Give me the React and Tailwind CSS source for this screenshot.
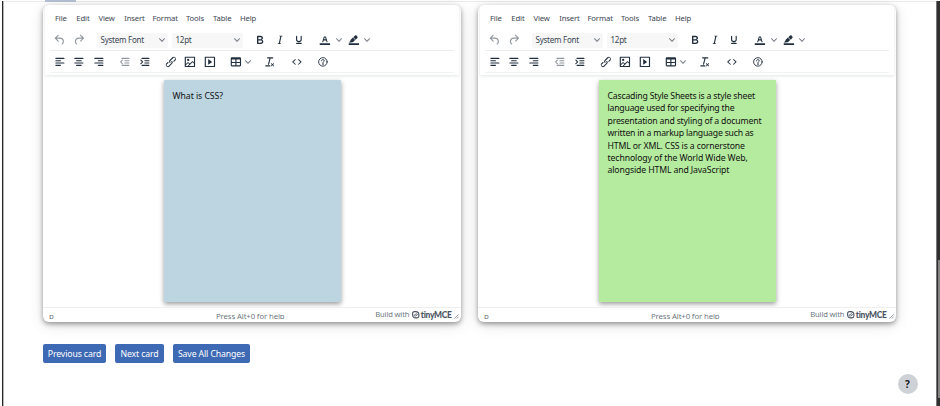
import React from "react";

const BAR = "c.6 0 1 .4 1 1s-.4 1-1 1";
const PATHS = {
  undo: "M6.4 8H12c3.7 0 6.2 2 6.8 5.1.6 2.7-.4 5.6-2.3 6.8a1 1 0 0 1-1-1.8c1.1-.6 1.8-2.7 1.4-4.6-.5-2.1-2.1-3.5-4.9-3.5H6.4l3.3 3.3a1 1 0 1 1-1.4 1.4l-5-5a1 1 0 0 1 0-1.4l5-5a1 1 0 0 1 1.4 1.4L6.4 8Z",
  redo: "M17.6 10H12c-2.8 0-4.4 1.4-4.9 3.5-.4 2 .3 4 1.4 4.6a1 1 0 1 1-1 1.8c-2-1.2-2.9-4.1-2.3-6.8.6-3 3-5.1 6.8-5.1h5.6l-3.3-3.3a1 1 0 1 1 1.4-1.4l5 5a1 1 0 0 1 0 1.4l-5 5a1 1 0 0 1-1.4-1.4l3.3-3.3Z",
  bold: "M7.8 19c-.3 0-.5 0-.6-.2l-.2-.5V5.7c0-.2 0-.4.2-.5l.6-.2h5c1.5 0 2.7.3 3.5 1 .7.6 1.1 1.4 1.1 2.5a3 3 0 0 1-.6 1.9c-.4.6-1 1-1.6 1.2.4.1.9.3 1.3.6s.8.7 1 1.2c.4.4.5 1 .5 1.6 0 1.3-.4 2.3-1.3 3-.8.7-2.1 1-3.8 1H7.8Zm5-8.3c.6 0 1.2-.1 1.6-.5.4-.3.6-.7.6-1.3 0-1.1-.8-1.7-2.3-1.7H9.3v3.5h3.4Zm.5 6c.7 0 1.3-.1 1.7-.4.4-.4.6-.9.6-1.5s-.2-1-.7-1.4c-.4-.3-1-.4-2-.4H9.4v3.8h4Z",
  italic: "m16.7 4.7-.1.9h-.3c-.6 0-1 0-1.4.3-.3.3-.4.6-.5 1.1l-2.1 9.8v.6c0 .5.4.8 1.4.8h.2l-.2.8H8l.2-.8h.2c1.1 0 1.8-.5 2-1.5l2-9.8.1-.5c0-.6-.4-.8-1.4-.8h-.3l.2-.9h5.8Z",
  underline: "M16 5c.6 0 1 .4 1 1v5.5a4 4 0 0 1-.4 1.8l-1 1.4a5.3 5.3 0 0 1-5.5 1 5 5 0 0 1-1.6-1c-.5-.4-.8-.9-1.1-1.4a4 4 0 0 1-.4-1.8V6c0-.6.4-1 1-1s1 .4 1 1v5.5c0 .3 0 .6.2 1l.6.7a3.3 3.3 0 0 0 2.2.8 3.4 3.4 0 0 0 2.2-.8c.3-.2.4-.5.6-.8l.2-.9V6c0-.6.4-1 1-1ZM8 17h8c.6 0 1 .4 1 1s-.4 1-1 1H8a1 1 0 0 1 0-2Z",
  color: "M3 18h18v3H3zM8.7 16h-.8a.5.5 0 0 1-.5-.6l2.7-9c.1-.3.3-.4.5-.4h2.8c.2 0 .4.1.5.4l2.7 9a.5.5 0 0 1-.5.6h-.8a.5.5 0 0 1-.4-.4l-.7-2.2c0-.3-.3-.4-.5-.4h-3.4c-.2 0-.4.1-.5.4l-.7 2.2c0 .3-.2.4-.4.4Zm2.6-7.6-.6 2a.5.5 0 0 0 .5.6h1.6a.5.5 0 0 0 .5-.6l-.6-2c0-.3-.3-.4-.5-.4h-.4c-.2 0-.4.1-.5.4Z",
  highlight: "M3 18h18v3H3zM7.7 16.7H3l3.3-3.3-.7-.8L10.2 8l4 4.1-4 4.2c-.2.2-.6.2-.8 0l-.6-.7-1.1 1.1zm5-7.5L11 7.4l3-2.9a2 2 0 0 1 2.6 0L18 6c.7.7.7 2 0 2.7l-2.9 2.9-1.8-1.8-.5-.6z",
  left: `M5 5h14${BAR}H5a1 1 0 1 1 0-2ZM5 9h8${BAR}H5a1 1 0 1 1 0-2ZM5 17h8${BAR}H5a1 1 0 0 1 0-2ZM5 13h14${BAR}H5a1 1 0 0 1 0-2Z`,
  center: `M5 5h14${BAR}H5a1 1 0 1 1 0-2ZM8 9h8${BAR}H8a1 1 0 1 1 0-2ZM8 17h8${BAR}H8a1 1 0 0 1 0-2ZM5 13h14${BAR}H5a1 1 0 0 1 0-2Z`,
  right: `M5 5h14${BAR}H5a1 1 0 1 1 0-2ZM11 9h8${BAR}h-8a1 1 0 0 1 0-2ZM11 17h8${BAR}h-8a1 1 0 0 1 0-2ZM5 13h14${BAR}H5a1 1 0 0 1 0-2Z`,
  outdent: `M7 5h12${BAR}H7a1 1 0 1 1 0-2ZM12 9h7${BAR}h-7a1 1 0 0 1 0-2ZM12 13h7${BAR}h-7a1 1 0 0 1 0-2ZM7 17h12${BAR}H7a1 1 0 0 1 0-2ZM8.6 9.2 5.8 12l2.8 2.8a1 1 0 0 1-1.3 1.3L3.9 12.6a1 1 0 0 1 0-1.2l3.4-3.5a1 1 0 0 1 1.3 1.3Z`,
  indent: `M7 5h12${BAR}H7a1 1 0 1 1 0-2ZM12 9h7${BAR}h-7a1 1 0 0 1 0-2ZM12 13h7${BAR}h-7a1 1 0 0 1 0-2ZM7 17h12${BAR}H7a1 1 0 0 1 0-2ZM4 9.2 6.8 12 4 14.8a1 1 0 0 0 1.3 1.3l3.4-3.5a1 1 0 0 0 0-1.2L5.3 7.9A1 1 0 0 0 4 9.2Z`,
  link: "M6.2 12.3a1 1 0 0 1 1.4 1.4l-2 2a2 2 0 1 0 2.6 2.8l4.8-4.8a1 1 0 0 0 0-1.4 1 1 0 1 1 1.4-1.3 2.9 2.9 0 0 1 0 4L9.6 20a3.9 3.9 0 0 1-5.5-5.5l2-2Zm11.6-.6a1 1 0 0 1-1.4-1.4l2-2a2 2 0 1 0-2.6-2.8L11 10.3a1 1 0 0 0 0 1.4A1 1 0 1 1 9.6 13a2.9 2.9 0 0 1 0-4L14.4 4a3.9 3.9 0 0 1 5.5 5.5l-2 2Z",
  image: "m5 15.7 3.3-3.2c.3-.3.7-.3 1 0L12 15l4.1-4c.3-.4.8-.4 1 0l2 1.9V5H5v10.7ZM5 18V19h3l2.8-2.9-2-2L5 17.9Zm14-3-2.5-2.4-6.4 6.5H19v-4ZM4 3h16c.6 0 1 .4 1 1v16c0 .6-.4 1-1 1H4a1 1 0 0 1-1-1V4c0-.6.4-1 1-1Zm5 7.5a2 2 0 1 0 0-4 2 2 0 0 0 0 4Z",
  media: "M4 3h16c.6 0 1 .4 1 1v16c0 .6-.4 1-1 1H4a1 1 0 0 1-1-1V4c0-.6.4-1 1-1Zm1 2v14h14V5H5Zm4.8 2.6 5.6 4a.5.5 0 0 1 0 .8l-5.6 4A.5.5 0 0 1 9 16V8a.5.5 0 0 1 .8-.4Z",
  table: "M19 4a2 2 0 0 1 2 2v12a2 2 0 0 1-2 2H5a2 2 0 0 1-2-2V6c0-1.1.9-2 2-2h14ZM5 14v4h6v-4H5Zm14 0h-6v4h6v-4Zm0-6h-6v4h6V8ZM5 12h6V8H5v4Z",
  clear: "M13.2 6a1 1 0 0 1 0 .2l-2.6 10a1 1 0 0 1-1 .8h-.2a.8.8 0 0 1-.8-1l2.6-10H8a1 1 0 1 1 0-2h9a1 1 0 0 1 0 2h-3.8ZM5 18h7a1 1 0 0 1 0 2H5a1 1 0 0 1 0-2Zm13 1.5L16.5 18 15 19.5a.7.7 0 0 1-1-1l1.5-1.5-1.5-1.5a.7.7 0 0 1 1-1l1.5 1.5 1.5-1.5a.7.7 0 0 1 1 1L17.5 17l1.5 1.5a.7.7 0 0 1-1 1Z",
  code: "M9.8 15.7c.3.3.3.8 0 1-.3.4-.9.4-1.2 0l-4.4-4.1a.8.8 0 0 1 0-1.2l4.4-4.2c.3-.3.9-.3 1.2 0 .3.3.3.8 0 1.1L6 12l3.8 3.7ZM14.2 15.7c-.3.3-.3.8 0 1 .4.4.9.4 1.2 0l4.4-4.1c.3-.3.3-.9 0-1.2l-4.4-4.2a.8.8 0 0 0-1.2 0c-.3.3-.3.8 0 1.1L18 12l-3.8 3.7Z",
};

function Tool({ name, faded = false, narrow = false }) {
  return (
    <span
      className={`flex h-full shrink-0 items-center justify-center ${narrow ? "w-[18px]" : "w-[19.5px]"} ${faded ? "text-[#222f3e]/50" : "text-[#222f3e]"}`}
    >
      <svg viewBox="0 0 24 24" className="size-[13.8px] shrink-0" fill="currentColor" fillRule="evenodd">
        {name === "help" ? (
          <g fill="none" stroke="currentColor" strokeWidth="1.6" strokeLinecap="round">
            <circle cx="12" cy="12" r="7.4" />
            <path d="M9.6 10.2c0-1.5 1-2.2 2.4-2.2s2.4.8 2.4 2c0 1.7-2.4 1.6-2.4 3.4" />
            <circle cx="12" cy="15.7" r=".4" />
          </g>
        ) : (
          <path d={PATHS[name]} />
        )}
      </svg>
    </span>
  );
}

function Chevron() {
  return (
    <svg viewBox="0 0 10 10" className="size-[6px] shrink-0" fill="#222f3e" fillOpacity="0.6">
      <path d="M8.7 2.2c.3-.3.8-.3 1 0 .4.4.4.9 0 1.2L5.7 7.8c-.3.3-.9.3-1.2 0L.2 3.4a.8.8 0 0 1 0-1.2c.3-.3.8-.3 1.1 0L5 6l3.7-3.8Z" />
    </svg>
  );
}

function Select({ label, spacing }) {
  return (
    <div className="flex h-[15px] w-[71.5px] shrink-0 items-center justify-between rounded-[2px] bg-[#f7f7f7] pr-[3.5px] pl-[4px] text-[8px] text-[#3a4552]">
      <span className={spacing}>{label}</span>
      <Chevron />
    </div>
  );
}

const MENUS = [
  ["File", "w-[21.3px]"],
  ["Edit", "w-[22.2px]"],
  ["View", "w-[25.7px]"],
  ["Insert", "w-[28.3px]"],
  ["Format", "w-[33.5px]"],
  ["Tools", "w-[27px]"],
  ["Table", "w-[27px]"],
  ["Help", "w-[20px]"],
];

function Editor({ lines, cardColor }) {
  return (
    <section className="flex h-[317px] w-[418px] shrink-0 flex-col overflow-hidden rounded-[6px] bg-white shadow-[0_2px_5px_rgba(0,0,0,0.38),0_3px_15px_rgba(0,0,0,0.12)]">
      <header className="relative mx-[2px] flex h-[70px] shrink-0 flex-col px-[5px] shadow-[0_1px_3px_rgba(34,47,62,0.13)]">
        <nav className="flex h-[26px] items-center pt-[1.5px] pl-[5px] text-[7.7px] tracking-[-0.13px] text-[#3c4653]">
          {MENUS.map(([label, width]) => (
            <span key={label} className={`${width} shrink-0 whitespace-nowrap`}>
              {label}
            </span>
          ))}
        </nav>
        <div className="flex h-[20px] items-center border-b border-[#ececec] pb-[1px]">
          <Tool name="undo" faded />
          <Tool name="redo" faded />
          <div className="ml-[7.5px] flex gap-[3.5px]">
            <Select label="System Font" spacing="tracking-[-0.25px]" />
            <Select label="12pt" spacing="tracking-[-0.25px]" />
          </div>
          <div className="ml-[7.5px] flex h-full items-center">
            <Tool name="bold" />
            <Tool name="italic" />
            <Tool name="underline" />
          </div>
          <div className="ml-[7px] flex h-full items-center">
            <Tool name="color" narrow />
            <span className="ml-[1.5px] flex w-[9px]">
              <Chevron />
            </span>
            <Tool name="highlight" narrow />
            <span className="ml-[1.5px] flex w-[9px]">
              <Chevron />
            </span>
          </div>
        </div>
        <div className="flex h-[21.5px] items-center border-b border-[#f3f3f3] pt-[1px]">
          <Tool name="left" />
          <Tool name="center" />
          <Tool name="right" />
          <div className="ml-[7px] flex h-full">
            <Tool name="outdent" faded />
            <Tool name="indent" />
          </div>
          <div className="ml-[6.5px] flex h-full">
            <Tool name="link" />
            <Tool name="image" />
            <Tool name="media" />
          </div>
          <div className="ml-[7px] flex h-full items-center">
            <Tool name="table" narrow />
            <Chevron />
          </div>
          <div className="ml-[10px] flex h-full">
            <Tool name="clear" />
          </div>
          <div className="ml-[7px] flex h-full">
            <Tool name="code" />
          </div>
          <div className="ml-[7px] flex h-full">
            <Tool name="help" />
          </div>
        </div>
      </header>
      <div className="flex min-h-0 flex-1 justify-center pt-[5px]">
        <article
          className={`ml-[1px] h-[221.5px] w-[177px] rounded-[1px] pt-[10px] pl-[8.5px] text-[8.7px] leading-[12.4px] text-[#111111] shadow-[0_2px_5px_rgba(0,0,0,0.4)] ${cardColor}`}
        >
          {lines.map(([text, spacing]) => (
            <p key={text} className={`whitespace-nowrap ${spacing}`}>
              {text}
            </p>
          ))}
        </article>
      </div>
      <footer className="flex h-[15px] shrink-0 items-center justify-between border-t border-[#eeeeee] pr-[2px] pl-[6px] text-[7.8px] text-[#222f3e]/70">
        <span className="h-[8px] w-[167px] overflow-hidden leading-[10px]">p</span>
        <span className="h-[8px] w-[70px] overflow-hidden leading-[10px] tracking-[-0.13px] whitespace-nowrap">
          Press Alt+0 for help
        </span>
        <span className="flex flex-1 items-center justify-end whitespace-nowrap">
          <span className="text-[7.6px] tracking-[-0.15px]">Build with</span>
          <svg viewBox="0 0 16 16" className="mr-[1px] ml-[3px] size-[7.5px]" fill="none" stroke="#4b5563" strokeWidth="2.4">
            <path d="M8 1.3C12.6 1.3 14.7 3.4 14.7 8v2.7c0 2.6-1.4 4-4 4H8C3.4 14.7 1.3 12.6 1.3 8V5.3c0-2.6 1.4-4 4-4Z" />
            <path d="M4.6 8.6 9 6.2c1.3-.6 2.4-.2 2.4 1v1.3L7 10.8c-1.3.6-2.4.2-2.4-1Z" strokeWidth="1.7" />
          </svg>
          <span className="font-['Lato','Liberation_Sans',sans-serif] text-[8.4px] leading-[10px] font-black tracking-[-0.28px] text-[#4b5563]">
            tinyMCE
          </span>
          <svg viewBox="0 0 6 6" className="mt-[4px] ml-[2.5px] size-[5px]" stroke="#626b76" strokeWidth="0.8">
            <path d="M.5 5.5 5.5.5M3.3 5.5 5.5 3.3" fill="none" />
          </svg>
        </span>
      </footer>
    </section>
  );
}

const QUESTION = [["What is CSS?", "tracking-[-0.06px]"]];
const ANSWER = [
  ["Cascading Style Sheets is a style sheet", "tracking-[-0.19px]"],
  ["language used for specifying the", "tracking-[-0.21px]"],
  ["presentation and styling of a document", "tracking-[-0.18px]"],
  ["written in a markup language such as", "tracking-[-0.21px]"],
  ["HTML or XML. CSS is a cornerstone", "tracking-[-0.14px]"],
  ["technology of the World Wide Web,", "tracking-[-0.11px]"],
  ["alongside HTML and JavaScript", "tracking-[-0.13px]"],
];

const BUTTONS = [
  ["Previous card", "w-[63px]"],
  ["Next card", "w-[49px]"],
  ["Save All Changes", "w-[77px]"],
];

export default function App() {
  return (
    <div className="flex h-[406px] w-[940px] overflow-hidden bg-white font-['Noto_Sans','Open_Sans',sans-serif]">
      <div className="mt-px ml-[2px] w-[2px] shrink-0 border-r border-[#b5b5b5] bg-[#252525]" />
      <main className="flex min-w-0 flex-1 flex-col pl-[39px]">
        <div className="-ml-[39px] h-[2px] shrink-0 border-b border-[#ebebeb] pl-[41px]">
          <div className="h-[2px] w-[31px] bg-[#b4bfd3]" />
        </div>
        <div className="mt-[3px] flex gap-[17px]">
          <Editor lines={QUESTION} cardColor="bg-[#bdd5e1]" />
          <Editor lines={ANSWER} cardColor="bg-[#b5eb9f]" />
        </div>
        <div className="mt-[22px] flex gap-[9px]">
          {BUTTONS.map(([label, width]) => (
            <button
              key={label}
              className={`${width} flex h-[19px] items-center justify-center rounded-[2px] bg-[#3e69b4] pt-[2px] text-[8.7px] tracking-[-0.12px] whitespace-nowrap text-white`}
            >
              {label}
            </button>
          ))}
        </div>
        <button className="mt-[11px] mr-[18.5px] flex size-5 items-center justify-center self-end rounded-full bg-[#ced2d7] text-[10px] font-bold text-[#15181c]">
          ?
        </button>
      </main>
      <div className="mt-px flex w-[4px] shrink-0 flex-col border-l border-[#777777] bg-[#303030] pt-[259px] pl-px">
        <div className="h-[138px] w-[2px] bg-[#858585]" />
      </div>
    </div>
  );
}
